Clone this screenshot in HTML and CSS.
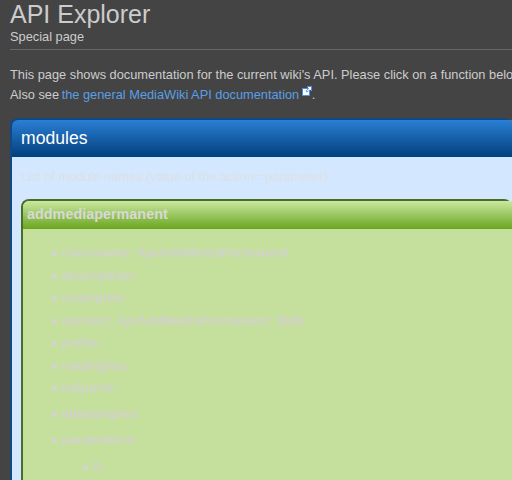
FILE: index.html
```html
<!DOCTYPE html>
<html lang="en">
<head>
  <meta charset="UTF-8" />
  <title>API Explorer</title>
  <link rel="stylesheet" href="styles.css">
</head>
<body>
  <div class="content">
    <h1>API Explorer</h1>
    <div class="subtitle">Special page</div>
    <p class="intro">
      This page shows documentation for the current wiki's API. Please click on a function below<br>
      Also see <a href="#">the general MediaWiki API documentation</a>
      <!-- external link icon -->
      <svg class="ext-icon" width="10" height="10" viewBox="0 0 10 10">
        <rect x="0" y="2" width="8" height="8" fill="#4f8fdc"/>
        <rect x="1" y="3" width="6" height="6" fill="#fff"/>
        <path d="M4.500 0H10V5.500L8 3.500 5 6.500 3.500 5 6.500 2z" fill="#4f8fdc"/>
        <path d="M5.500 1H9V4.500L8 3.500 5 5.500 4.500 5 7 2.500z" fill="#fff"/>
      </svg>.
    </p>
    <div class="panel blue">
      <div class="panel-head">modules</div>
      <div class="panel-body">
        <p class="note">List of module names (value of the action= parameter)</p>
        <div class="panel green">
          <div class="panel-head">addmediapermanent</div>
          <div class="panel-body">
            <ul class="props">
              <li>classname: ApiAddMediaPermanent</li>
              <li>description:</li>
              <li>examples:</li>
              <li>version: ApiAddMediaPermanent: $Id$</li>
              <li>prefix:</li>
              <li>readrights:</li>
              <li>helpurls:</li>
              <li class="wide">allexamples:</li>
              <li class="wide">parameters:
                <ul class="props sub">
                  <li>0:</li>
                </ul>
              </li>
            </ul>
          </div>
        </div>
      </div>
    </div>
  </div>
</body>
</html>
```
FILE: styles.css
```css
html, body {
  margin: 0;
  height: 480px;
  overflow: hidden;
}
body {
  background: #444;
  font-family: "Liberation Sans", Arial, sans-serif;
  color: #ccc;
}
.content {
  width: 502px;
  padding-left: 10px;
  overflow: hidden;
}
h1 {
  margin: 0;
  font-size: 25px;
  font-weight: normal;
  line-height: 28px;
}
.subtitle {
  font-size: 12.800px;
  line-height: 18px;
  padding-bottom: 3px;
  border-bottom: 1px solid #666;
}
.intro {
  margin: 15px 0 13px;
  font-size: 12.800px;
  line-height: 20px;
  white-space: nowrap;
}
.intro a {
  margin-left: -1px;
  color: #5a9fe6;
  text-decoration: none;
}
.ext-icon {
  margin-left: -1px;
  vertical-align: 3px;
}
.panel {
  border-radius: 8px 8px 0 0;
  border-style: solid;
  border-width: 2px 0 0 2px;
}
.panel-head {
  border-radius: 6px 0 0 0;
}
.blue {
  border-color: #0f4a86;
}
.blue > .panel-head {
  height: 37px;
  padding-left: 9px;
  font-size: 17.600px;
  line-height: 36px;
  color: #fff;
  background: linear-gradient(#2a7fd4, #023f7c);
}
.blue > .panel-body {
  background: #d3e8ff;
  padding: 11px 0 0 9px;
}
.note {
  margin: 0 0 13px;
  font-size: 12.800px;
  line-height: 18px;
  color: #dde0e4;
}
.green {
  border-color: #4a6e2a;
}
.green > .panel-head {
  height: 28px;
  padding-left: 4px;
  font-size: 14.400px;
  font-weight: bold;
  line-height: 26px;
  color: #d8d8d8;
  background: linear-gradient(#c9e8a0, #6aa51f);
}
.green > .panel-body {
  background: #c5e09d;
  height: 260px;
  padding: 16px 0 0 0;
}
.props {
  margin: 0;
  padding: 0 0 0 29px;
  list-style: none;
  font-size: 13.200px;
  font-weight: bold;
  color: #d2d3ca;
  line-height: 16px;
}
.props li {
  position: relative;
  padding-left: 10px;
  margin-bottom: 6.500px;
}
.props li::before {
  content: "";
  position: absolute;
  left: 0;
  top: 6px;
  width: 5px;
  height: 5px;
  background: #d2d3ca;
}
.props li.wide {
  margin-top: 10px;
}
.props.sub {
  margin-top: 11px;
  padding-left: 21px;
}
```
